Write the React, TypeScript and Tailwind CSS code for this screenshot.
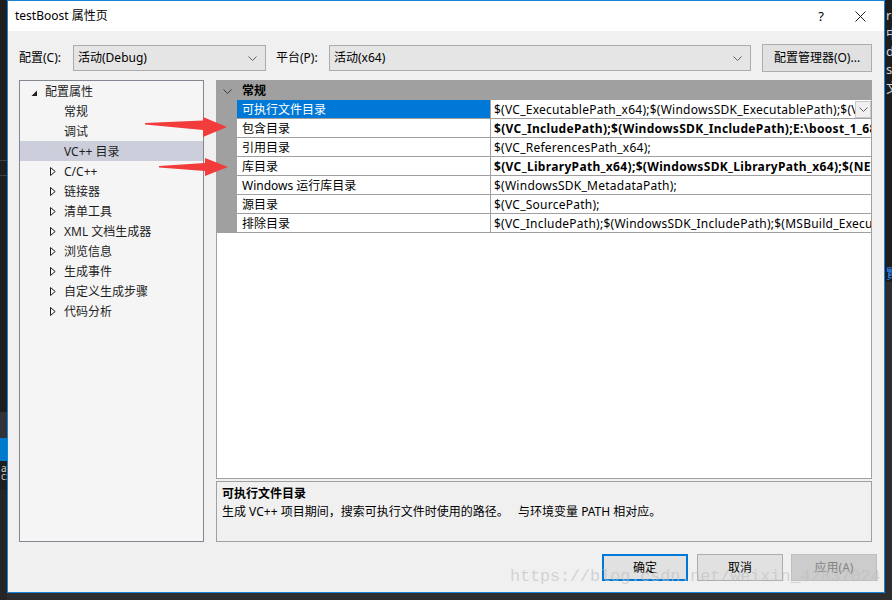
import { ReactNode } from "react";

type Node = {
  label: string;
  level: 0 | 1;
  arrow?: "open" | "closed";
  selected?: boolean;
};

const TREE: Node[] = [
  { label: "配置属性", level: 0, arrow: "open" },
  { label: "常规", level: 1 },
  { label: "调试", level: 1 },
  { label: "VC++ 目录", level: 1, selected: true },
  { label: "C/C++", level: 1, arrow: "closed" },
  { label: "链接器", level: 1, arrow: "closed" },
  { label: "清单工具", level: 1, arrow: "closed" },
  { label: "XML 文档生成器", level: 1, arrow: "closed" },
  { label: "浏览信息", level: 1, arrow: "closed" },
  { label: "生成事件", level: 1, arrow: "closed" },
  { label: "自定义生成步骤", level: 1, arrow: "closed" },
  { label: "代码分析", level: 1, arrow: "closed" },
];

type Row = { name: string; value: string; bold?: boolean; selected?: boolean };

const ROWS: Row[] = [
  {
    name: "可执行文件目录",
    value:
      "$(VC_ExecutablePath_x64);$(WindowsSDK_ExecutablePath);$(VS_ExecutablePath);$(MSBuild_ExecutablePath);$(FxCopDir);$(PATH);",
    selected: true,
  },
  {
    name: "包含目录",
    value: "$(VC_IncludePath);$(WindowsSDK_IncludePath);E:\\boost_1_68_0;",
    bold: true,
  },
  { name: "引用目录", value: "$(VC_ReferencesPath_x64);" },
  {
    name: "库目录",
    value:
      "$(VC_LibraryPath_x64);$(WindowsSDK_LibraryPath_x64);$(NETFXKitsDir)Lib\\um\\x64;E:\\boost_1_68_0\\stage\\lib;",
    bold: true,
  },
  { name: "Windows 运行库目录", value: "$(WindowsSDK_MetadataPath);" },
  { name: "源目录", value: "$(VC_SourcePath);" },
  {
    name: "排除目录",
    value:
      "$(VC_IncludePath);$(WindowsSDK_IncludePath);$(MSBuild_ExecutablePath);$(VC_LibraryPath_x64);",
  },
];

function Chevron({ color = "#606060" }: { color?: string }) {
  return (
    <svg width="9" height="5" viewBox="0 0 9 5">
      <path d="M0.5 0.5 L4.5 4.5 L8.5 0.5" fill="none" stroke={color} strokeWidth="1" />
    </svg>
  );
}

function Select({ text, width }: { text: string; width: string }) {
  return (
    <div
      className={`flex h-[26px] items-center justify-between border border-[#acacac] bg-[#e5e5e5] pl-[4px] pr-[8px] ${width}`}
    >
      <span>{text}</span>
      <Chevron />
    </div>
  );
}

function Button({ children, kind }: { children: ReactNode; kind: "default" | "normal" | "disabled" }) {
  const cls =
    kind === "default"
      ? "border-2 border-[#0078d7] bg-[#e1e1e1] text-black"
      : kind === "normal"
        ? "border border-[#adadad] bg-[#e1e1e1] text-black"
        : "border border-[#bfbfbf] bg-[#cccccc] text-[#838383]";
  return (
    <div className={`flex h-[27px] w-[86px] items-center justify-center ${cls}`}>{children}</div>
  );
}

function TreeArrow({ kind }: { kind: "open" | "closed" }) {
  if (kind === "open") {
    return (
      <svg width="7" height="7" viewBox="0 0 7 7" className="mt-[2px]">
        <polygon points="6,0.5 6,6 0.5,6" fill="#1e1e1e" />
      </svg>
    );
  }
  return (
    <svg width="6" height="9" viewBox="0 0 6 9" className="-mt-px">
      <polygon points="0.5,0.5 5.2,4.5 0.5,8.5" fill="none" stroke="#1e1e1e" strokeWidth="1" />
    </svg>
  );
}

function Tree() {
  return (
    <div className="flex h-full w-[186px] flex-col border border-[#828790] bg-[#f5f5f5]">
      {TREE.map((n) => (
        <div
          key={n.label}
          className={`flex h-[20px] shrink-0 items-center pt-[2px] ${n.selected ? "bg-[#cccedb]" : ""} ${
            n.level === 0 ? "pl-[11px]" : n.arrow ? "pl-[30px]" : "pl-[44px]"
          }`}
        >
          {n.arrow && (
            <span className="flex w-[14px] items-center">
              <TreeArrow kind={n.arrow} />
            </span>
          )}
          <span className="text-[#1e1e1e]">{n.label}</span>
        </div>
      ))}
    </div>
  );
}

function Grid() {
  return (
    <div className="flex h-[399px] flex-col border border-[#a0a0a0] bg-white">
      <div className="flex h-[19px] shrink-0 items-center bg-[#a0a0a0] pt-px">
        <span className="flex w-[20px] justify-center pl-[1px]">
          <Chevron color="#3a3a3a" />
        </span>
        <span className="pl-[5px] font-bold">常规</span>
      </div>
      {ROWS.map((r) => (
        <div key={r.name} className="flex h-[19px] shrink-0">
          <div className="w-[20px] bg-[#a0a0a0]" />
          <div
            className={`flex w-[254px] items-center whitespace-nowrap border-b border-r border-[#a0a0a0] pl-[5px] pt-[2px] ${
              r.selected ? "bg-[#0078d7] text-white" : ""
            }`}
          >
            {r.name}
          </div>
          <div className="flex min-w-0 flex-1 items-center border-b border-[#a0a0a0] pl-[3px]">
            <span
              className={`min-w-0 flex-1 overflow-hidden whitespace-nowrap pt-[2px] ${
                r.bold ? "font-bold tracking-[0.33px]" : "tracking-[0.25px]"
              }`}
            >
              {r.value}
            </span>
            {r.selected && (
              <span className="flex h-[17px] w-[16px] shrink-0 items-center justify-center border border-[#c8c8c8] bg-[#f0f0f0]">
                <Chevron />
              </span>
            )}
          </div>
        </div>
      ))}
    </div>
  );
}

function LeftStrip() {
  return (
    <div className="flex w-[7px] shrink-0 flex-col overflow-hidden bg-[#1e1e1e] text-[10px] leading-[8px] text-[#cccccc]">
      <div className="h-[160px] shrink-0" />
      <div className="h-px shrink-0 bg-[#3f3f46]" />
      <div className="h-[14px] shrink-0" />
      <div className="h-px shrink-0 bg-[#3f3f46]" />
      <div className="h-[236px] shrink-0" />
      <div className="h-[26px] shrink-0 bg-[#333337]" />
      <div className="h-[23px] shrink-0 bg-[#007acc]" />
      <div className="mt-[3px] pl-[1px]">at</div>
      <div className="pl-[1px]">c:</div>
      <div className="mt-[10px] h-[150px] bg-[#252526]" />
    </div>
  );
}

function RightStrip() {
  return (
    <div className="flex w-[7px] shrink-0 flex-col overflow-hidden bg-[#1e1e1e] pl-px text-[13px] leading-[18px] text-[#d4d4d4]">
      <div className="mt-[6px]">rg</div>
      <div>中</div>
      <div>d</div>
      <div>s</div>
      <div>文</div>
      <div className="mt-[168px] text-[#3794ff]">賢</div>
    </div>
  );
}

export default function App() {
  return (
    <div className="relative flex h-[600px] w-[892px] items-start overflow-hidden bg-[#2d2d30] font-['Noto_Sans','Noto_Sans_CJK_SC',sans-serif] text-[12px] leading-[18px] text-black">
      <LeftStrip />
      <div className="flex h-[593px] w-[878px] shrink-0 flex-col border border-[#1883d7] bg-[#f0f0f0]">
        {/* title bar */}
        <div className="flex h-[30px] shrink-0 items-center bg-white pl-[7px] pr-[18px]">
          <span>testBoost 属性页</span>
          <span className="flex-1" />
          <span className="mr-[31px] text-[13px]">?</span>
          <svg width="11" height="11" viewBox="0 0 11 11">
            <path d="M0.5 0.5 L10.5 10.5 M10.5 0.5 L0.5 10.5" stroke="#1e1e1e" strokeWidth="1" />
          </svg>
        </div>

        <div className="flex flex-1 flex-col pl-[11px] pr-[12px]">
          {/* config row */}
          <div className="mt-[13px] flex h-[28px] items-center">
            <span className="w-[54px]">配置(C):</span>
            <Select text="活动(Debug)" width="w-[193px]" />
            <span className="ml-[10px] w-[53px]">平台(P):</span>
            <Select text="活动(x64)" width="w-[422px]" />
            <div className="ml-[11px] flex h-[28px] w-[110px] items-center justify-center border border-[#adadad] bg-[#e1e1e1]">
              配置管理器(O)...
            </div>
          </div>

          {/* main area */}
          <div className="mt-[8px] flex h-[462px]">
            <Tree />
            <div className="ml-[12px] flex w-[656px] flex-col">
              <Grid />
              <div className="mt-[2px] flex h-[61px] flex-col border border-[#a0a0a0] pl-[5px] pt-[3px]">
                <span className="font-bold">可执行文件目录</span>
                <span>
                  生成 VC++ 项目期间，搜索可执行文件时使用的路径。{"\u00a0\u00a0\u00a0"}与环境变量 PATH 相对应。
                </span>
              </div>
            </div>
          </div>

          {/* buttons */}
          <div className="-mr-[5px] mt-[12px] flex justify-end">
            <Button kind="default">确定</Button>
            <div className="ml-[9px]">
              <Button kind="normal">取消</Button>
            </div>
            <div className="ml-[8px]">
              <Button kind="disabled">应用(A)</Button>
            </div>
          </div>
        </div>
      </div>
      <RightStrip />

      {/* annotation arrows */}
      <svg className="pointer-events-none absolute left-0 top-0" width="892" height="600" viewBox="0 0 892 600">
        <polygon points="145,123 203,120.5 203,117 227,127 203,137 203,130 145,124.5" fill="#f23b3b" />
        <polygon points="159,166 205,163 205,158 228,167 205,176 205,171 159,167.5" fill="#f23b3b" />
      </svg>

      {/* watermark */}
      <div className="pointer-events-none absolute left-[510px] top-[566px] whitespace-nowrap font-['Liberation_Mono',monospace] text-[16.7px] leading-[22px] text-[#bdbdbd]/60">
        https://blog.csdn.net/weixin_42837024
      </div>
    </div>
  );
}
